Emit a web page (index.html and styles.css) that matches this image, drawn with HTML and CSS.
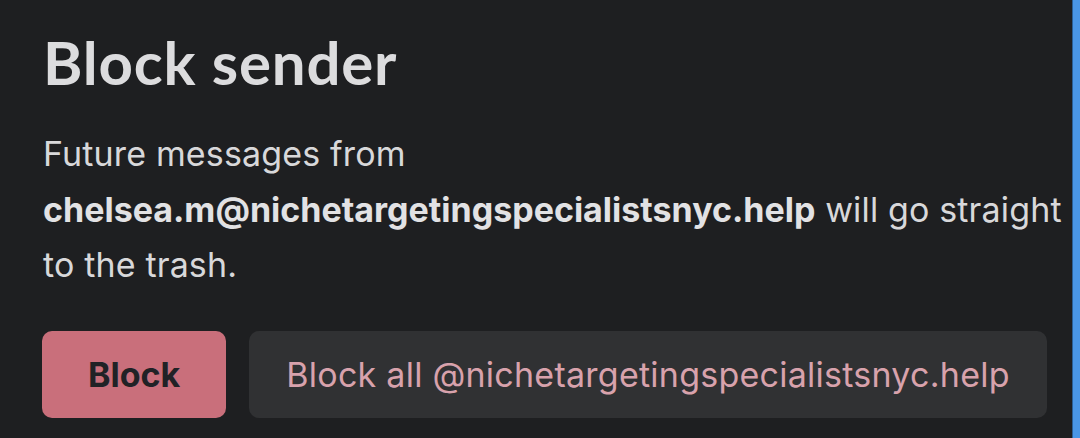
FILE: index.html
```html
<!DOCTYPE html>
<html lang="en">
<head>
    <meta charset="UTF-8">
    <meta name="viewport" content="width=device-width, initial-scale=1.0">
    <title>Block sender</title>
    <link rel="stylesheet" href="styles.css">
</head>
<body>
    <div class="layout">
        <div class="dialog">
            <h1>Block sender</h1>

            <p class="message">Future messages from <strong>chelsea.m@nichetargetingspecialistsnyc.help</strong> will go straight to the trash.</p>

            <!-- Block actions -->
            <div class="actions">
                <button class="btn btn-block">Block</button>
                <button class="btn btn-domain">Block all @nichetargetingspecialistsnyc.help</button>
            </div>
        </div>

        <!-- Edge of the window behind the dialog -->
        <div class="edge"></div>
    </div>
</body>
</html>
```
FILE: styles.css
```css
body {
    margin: 0;
    padding: 0;
    background-color: #1e1f21;
    color: #d8d8da;
    font-family: 'Inter', sans-serif;
    height: 100vh;
    overflow: hidden;
}
.layout {
    display: flex;
    height: 100%;
}
.dialog {
    flex: 1;
    padding: 26px 0 0 43px;
}
.edge {
    width: 7px;
    background-color: #4a96e6;
    border-left: 1px solid #2b5f96;
}
h1 {
    margin: 0 0 28px;
    font-family: 'Lato', sans-serif;
    font-size: 60px;
    font-weight: 700;
    line-height: 72px;
    letter-spacing: 0.8px;
    color: #dcdcde;
}
.message {
    margin: 0 0 38px;
    font-size: 34px;
    line-height: 55.5px;
    letter-spacing: 0.15px;
    color: #d8d8da;
}
.message strong {
    font-weight: 700;
    letter-spacing: 0;
    color: #e2e2e4;
}
.actions {
    display: flex;
    gap: 23px;
}
.btn {
    height: 87px;
    border: none;
    border-radius: 10px;
    font-family: 'Inter', sans-serif;
    font-size: 34px;
    cursor: pointer;
}
.btn-block {
    padding: 0 46px;
    margin-left: -1px;
    background-color: #c96f7b;
    color: #212226;
    font-weight: 700;
}
.btn-block:hover {
    background-color: #d27d88;
}
.btn-domain {
    padding: 0 37px;
    background-color: #303133;
    color: #d8a2ac;
    font-weight: 400;
    letter-spacing: 0.25px;
}
.btn-domain:hover {
    background-color: #3a3b3e;
}
```
